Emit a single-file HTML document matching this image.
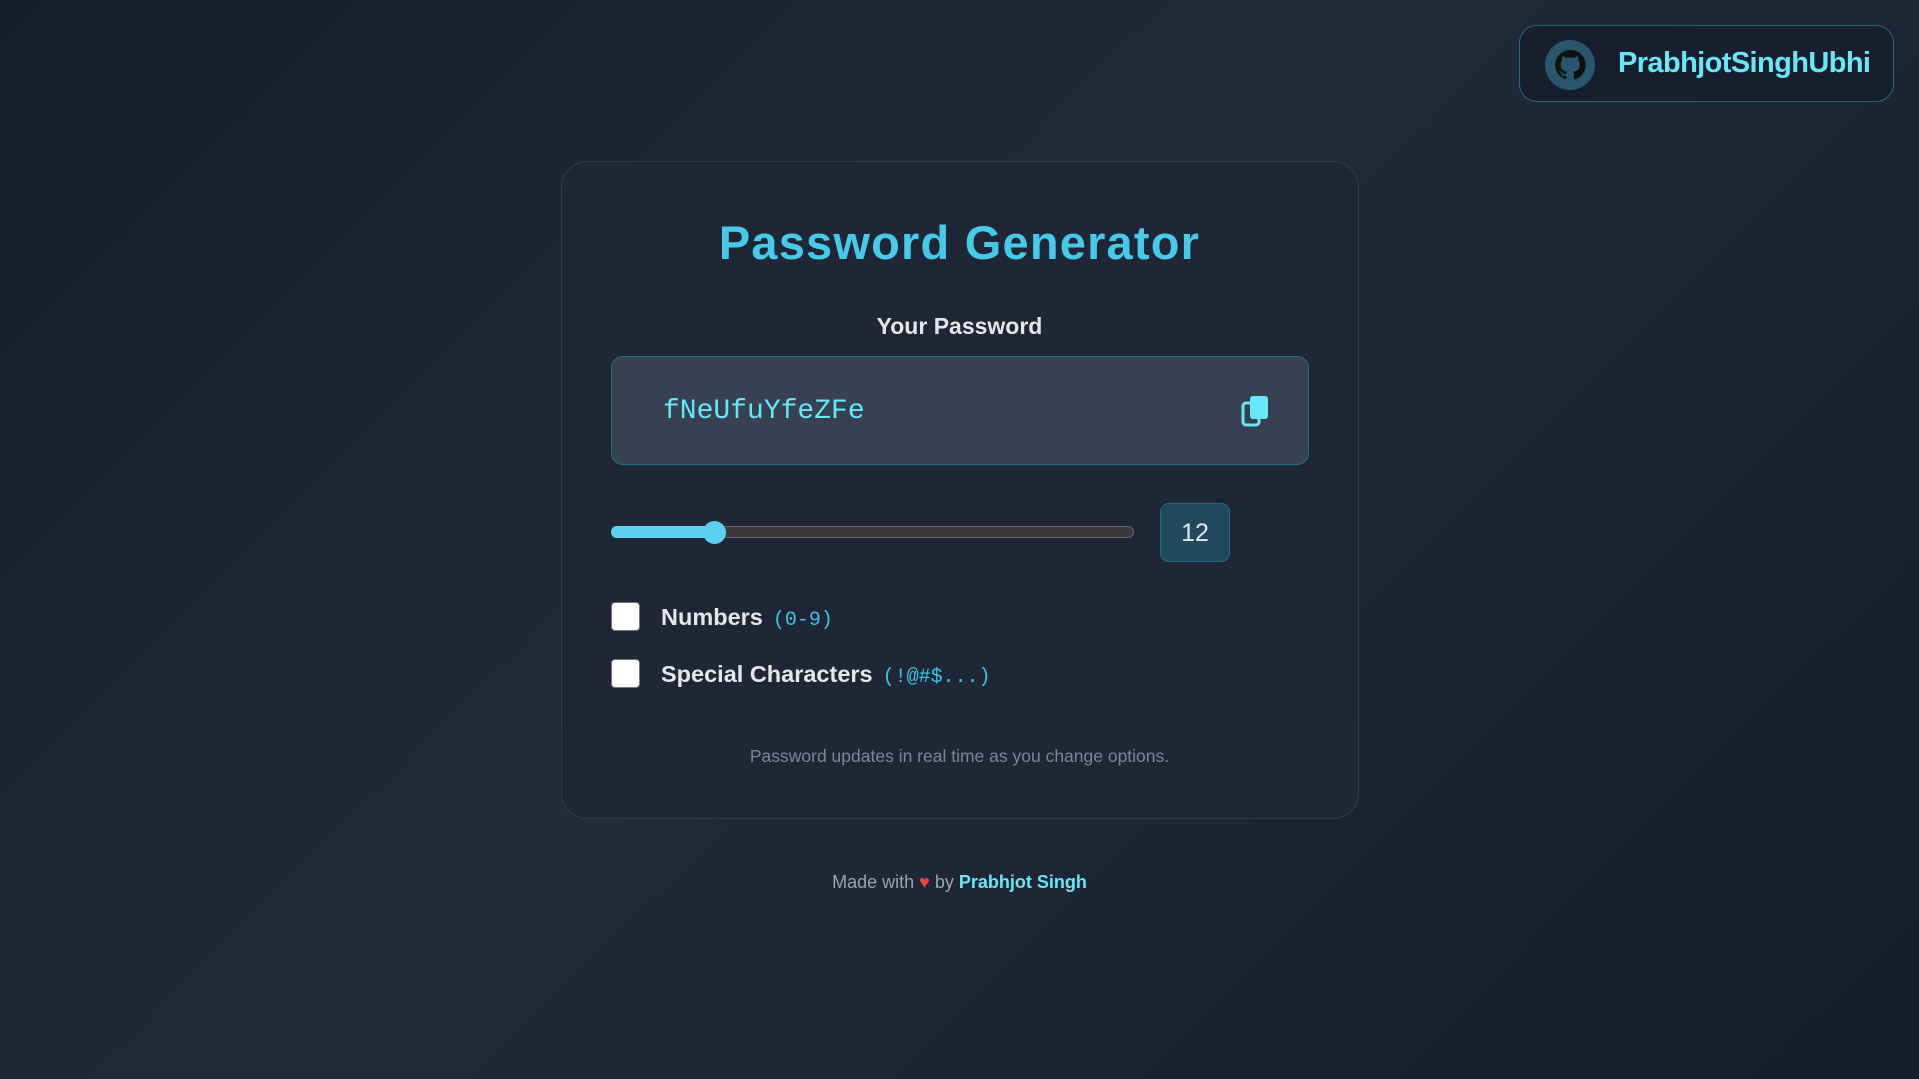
<!DOCTYPE html>
<html><head><meta charset="utf-8"><style>
*{box-sizing:border-box;margin:0;padding:0}
body{width:1919px;height:1079px;overflow:hidden;font-family:"Liberation Sans",sans-serif;background:linear-gradient(135deg,#171d2b 0%,#222a39 45%,#161c2b 100%);position:relative;color:#e5e7eb}
.gh{position:absolute;left:1519px;top:25px;width:375px;height:77px;border:1.5px solid #1f6a85;border-radius:18px;background:#181e2d}
.gh .c{position:absolute;left:25px;top:14px;width:50px;height:50px;border-radius:50%;background:#28566c}
.gh .t{position:absolute;left:98px;top:21px;font-size:29px;font-weight:bold;color:#67e8f9;letter-spacing:-0.6px}
.card{position:absolute;left:561px;top:161px;width:798px;height:658px;border:1.5px solid #303a4a;border-radius:26px;background:#1f2737}
h1{position:absolute;left:0;right:0;top:215px;text-align:center;font-size:47px;font-weight:bold;color:#45cbe9;letter-spacing:1.2px}
.lbl{position:absolute;left:0;right:0;top:313px;text-align:center;font-size:23px;font-weight:600;color:#e5e7eb}
.inp{position:absolute;left:611px;top:356px;width:698px;height:109px;background:#374151;border:1.5px solid #1d6e8b;border-radius:12px}
.pw{position:absolute;left:51px;top:39px;font-family:"Liberation Mono",monospace;font-size:28px;color:#67e8f9}
.track{position:absolute;left:611px;top:526px;width:523px;height:12px;border-radius:6px;background:#3a3a3a;border:1px solid #666}
.fill{position:absolute;left:611px;top:526px;width:104px;height:12px;border-radius:6px;background:#5ccfee}
.thumb{position:absolute;left:703px;top:521px;width:23px;height:23px;border-radius:50%;background:#5ccfee}
.num{position:absolute;left:1160px;top:503px;width:70px;height:59px;background:#21495e;border:1.5px solid #1f6a85;border-radius:9px;text-align:center;line-height:59px;font-size:25px;color:#e5e7eb}
.cb{position:absolute;left:611px;width:29px;height:29px;background:#fff;border:1.5px solid #777;border-radius:4px}
.opt{position:absolute;left:661px;font-size:23.5px;font-weight:600;color:#e5e7eb}
.opt span{font-family:"Liberation Mono",monospace;font-size:20px;font-weight:normal;color:#38c6e8;margin-left:10px}
.note{position:absolute;left:0;right:0;top:746px;text-align:center;font-size:17.5px;color:#7d8696}
.foot{position:absolute;left:0;right:0;top:872px;text-align:center;font-size:18px;color:#9aa3b0}
.foot b{color:#67e8f9}
</style></head><body>
<div class="gh"><div class="c"><svg width="50" height="50" viewBox="0 0 50 50"><path fill="#111" d="M25 10a15 15 0 0 0-4.7 29.2c.7.1 1-.3 1-.7v-2.6c-4.2.9-5-1.8-5-1.8-.7-1.7-1.7-2.2-1.7-2.2-1.4-.9.1-.9.1-.9 1.5.1 2.3 1.6 2.3 1.6 1.3 2.3 3.5 1.6 4.4 1.2.1-1 .5-1.6 1-2-3.300-.4-6.8-1.7-6.8-7.4 0-1.600.6-3 1.6-4-.2-.4-.7-1.9.1-4 0 0 1.3-.4 4.1 1.5a14 14 0 0 1 7.5 0c2.9-1.9 4.1-1.5 4.1-1.5.8 2.1.3 3.6.2 4 1 1 1.5 2.4 1.5 4 0 5.8-3.5 7-6.8 7.4.5.5 1 1.4 1 2.8v4.1c0 .4.3.9 1 .7A15 15 0 0 0 25 10z"/></svg></div><div class="t">PrabhjotSinghUbhi</div></div>
<div class="card"></div>
<h1>Password Generator</h1>
<div class="lbl">Your Password</div>
<div class="inp"><div class="pw">fNeUfuYfeZFe</div>
<svg style="position:absolute;left:629px;top:38px" width="30" height="32" viewBox="0 0 30 32"><rect x="2" y="8" width="16" height="22" rx="3" fill="none" stroke="#67e8f9" stroke-width="3"/><rect x="9" y="1" width="18" height="23" rx="3" fill="#67e8f9"/></svg></div>
<div class="track"></div><div class="fill"></div><div class="thumb"></div>
<div class="num">12</div>
<div class="cb" style="top:602px"></div><div class="opt" style="top:604px">Numbers<span>(0-9)</span></div>
<div class="cb" style="top:659px"></div><div class="opt" style="top:661px">Special Characters<span>(!@#$...)</span></div>
<div class="note">Password updates in real time as you change options.</div>
<div class="foot">Made with <span style="color:#ef4444">♥</span> by <b>Prabhjot Singh</b></div>
</body></html>
